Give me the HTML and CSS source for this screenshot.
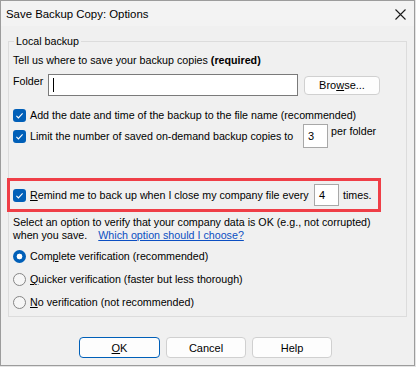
FILE: index.html
```html
<!DOCTYPE html>
<html lang="en">
<head>
    <meta charset="UTF-8">
    <title>Save Backup Copy: Options</title>
    <link rel="stylesheet" href="styles.css">
</head>
<body>
    <div class="window">
        <div class="titlebar">
            <span class="title">Save Backup Copy: Options</span>
            <svg class="close" width="11" height="11" viewBox="0 0 11 11">
                <path d="M0.5 0.5 L10.5 10.5 M10.5 0.5 L0.5 10.5" stroke="#1a1a1a" stroke-width="1.1" fill="none"/>
            </svg>
        </div>

        <div class="content">
            <div class="group">
                <span class="legend">Local backup</span>

                <div class="line">Tell us where to save your backup copies <b>(required)</b></div>

                <div class="folder-row">
                    <span class="folder-label">Folder</span>
                    <div class="textbox wide"><span class="caret"></span></div>
                    <button class="btn browse">Bro<u>w</u>se...</button>
                </div>

                <div class="check-row first">
                    <span class="box"><svg width="13" height="13" viewBox="0 0 13 13"><path d="M3.4 6.9 L5.4 8.9 L9.6 4.4" stroke="#fff" stroke-width="1.1" fill="none"/></svg></span>
                    <span>Add the date and time of the backup to the file name (recommended)</span>
                </div>

                <div class="check-row limit">
                    <span class="box"><svg width="13" height="13" viewBox="0 0 13 13"><path d="M3.4 6.9 L5.4 8.9 L9.6 4.4" stroke="#fff" stroke-width="1.1" fill="none"/></svg></span>
                    <span class="limit-label">Limit the number of saved on-demand backup copies to</span>
                    <div class="textbox num tall">3</div>
                    <span class="after high">per folder</span>
                </div>

                <div class="highlight">
                    <span class="box"><svg width="13" height="13" viewBox="0 0 13 13"><path d="M3.4 6.9 L5.4 8.9 L9.6 4.4" stroke="#fff" stroke-width="1.1" fill="none"/></svg></span>
                    <span class="remind-label"><u>R</u>emind me to back up when I close my company file every</span>
                    <div class="textbox num">4</div>
                    <span class="after">times.</span>
                </div>

                <p class="verify">Select an option to verify that your company data is OK (e.g., not corrupted)<br>when you save.<a href="#" class="help-link">Which option should I choose?</a></p>

                <div class="radio-row first">
                    <span class="radio checked"></span>
                    <span>Com<u>p</u>lete verification (recommended)</span>
                </div>
                <div class="radio-row">
                    <span class="radio"></span>
                    <span><u>Q</u>uicker verification (faster but less thorough)</span>
                </div>
                <div class="radio-row">
                    <span class="radio"></span>
                    <span><u>N</u>o verification (not recommended)</span>
                </div>
            </div>

            <div class="buttons">
                <button class="btn default"><u>O</u>K</button>
                <button class="btn">Cancel</button>
                <button class="btn">Help</button>
            </div>
        </div>
    </div>
</body>
</html>
```

FILE: styles.css
```css
* {
    margin: 0;
    padding: 0;
    box-sizing: border-box;
}

body {
    font-family: "Liberation Sans", Arial, sans-serif;
    font-size: 10.7px;
    color: #000;
    background: #e4e4e4;
    white-space: nowrap;
}

.window {
    width: 415px;
    height: 366px;
    border: 1px solid #9c9c9c;
    background: #f0f0f0;
}

.titlebar {
    height: 25px;
    background: #f3f3f3;
    display: flex;
    align-items: center;
    justify-content: space-between;
    padding: 1px 8px 0 5px;
}

.title {
    font-size: 11.4px;
    line-height: 16px;
}

.content {
    padding: 0 7px;
}

.group {
    position: relative;
    margin-top: 15px;
    border: 1px solid #dcdcdc;
    padding: 10px 4px 6px 4px;
}

.legend {
    position: absolute;
    top: -9px;
    left: 5px;
    padding: 0 2px;
    background: #f0f0f0;
    line-height: 16px;
}

.line {
    line-height: 16px;
}

.folder-row {
    display: flex;
    align-items: center;
    margin-top: 6px;
    height: 22px;
}

.folder-label {
    width: 35px;
    align-self: flex-start;
    margin-top: -1px;
    line-height: 16px;
}

.textbox {
    background: #fff;
    border: 1px solid #7a7a7a;
    display: flex;
    align-items: center;
    padding-left: 4px;
    line-height: 16px;
}

.textbox.wide {
    width: 250px;
    height: 22px;
}

.caret {
    width: 1px;
    height: 14px;
    background: #000;
}

.textbox.num {
    width: 25px;
    height: 22px;
    border-color: #a8a8a8;
    font-size: 11px;
}

.textbox.tall {
    height: 24px;
}

.btn {
    font-family: inherit;
    font-size: 11px;
    color: #000;
    background: #fdfdfd;
    border: 1px solid #d0d0d0;
    border-radius: 4px;
    line-height: 16px;
}

.browse {
    width: 76px;
    height: 19px;
    margin-left: 6px;
}

.check-row {
    display: flex;
    align-items: center;
    line-height: 16px;
}

.check-row.first {
    margin-top: 11px;
    height: 16px;
}

.check-row.limit {
    margin-top: 1px;
    height: 24px;
}

.box {
    width: 13px;
    height: 13px;
    border-radius: 3px;
    background: #005fb8;
    margin-right: 4px;
    flex-shrink: 0;
}

.box svg {
    display: block;
}

.limit-label {
    width: 273px;
}

.after {
    margin-left: 4px;
}

.after.high {
    align-self: flex-start;
    margin-top: -1px;
    margin-left: 3px;
}

.highlight {
    display: flex;
    align-items: center;
    margin: 30px 0 0 -6px;
    width: 374px;
    height: 34px;
    border: 3px solid #ef3e47;
    padding-left: 3px;
    line-height: 16px;
}

.remind-label {
    width: 284px;
}

.verify {
    margin-top: 4px;
    line-height: 13px;
}

.help-link {
    margin-left: 11px;
    color: #0b4fc2;
}

.radio-row {
    display: flex;
    align-items: center;
    height: 16px;
    margin-top: 7px;
    line-height: 16px;
}

.radio-row.first {
    margin-top: 6px;
}

.radio {
    width: 13px;
    height: 13px;
    border-radius: 50%;
    border: 1px solid #858585;
    background: #f6f6f6;
    margin-right: 4px;
    flex-shrink: 0;
}

.radio.checked {
    border: none;
    background: radial-gradient(circle, #fff 0 2.6px, #005fb8 3.2px);
}

.buttons {
    display: flex;
    gap: 6px;
    margin: 20px 0 0 71px;
}

.buttons .btn {
    width: 80px;
    height: 21px;
}

.btn.default {
    width: 81px;
    border-color: #005fb8;
}
```
